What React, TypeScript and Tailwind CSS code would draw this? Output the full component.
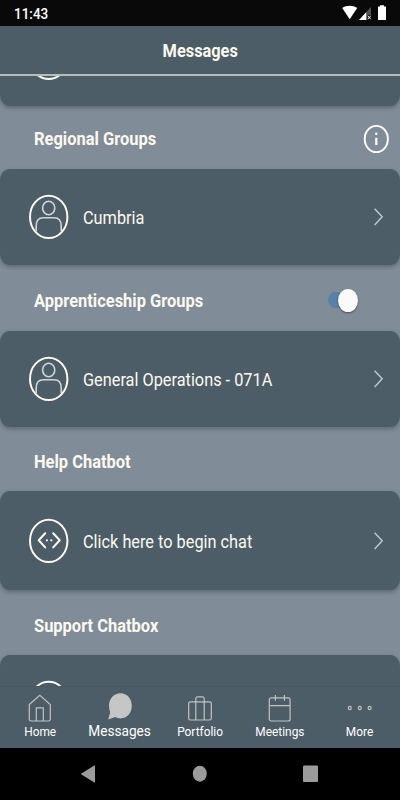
import React from 'react';
import clsx from 'clsx';

type AvatarKind = 'person' | 'bot';

function Avatar({ kind }: { kind: AvatarKind }) {
  return (
    <svg width="40" height="46" viewBox="0 0 40 46" fill="none" className="shrink-0">
      <ellipse cx="19.7" cy="22.9" rx="18.7" ry="21.2" stroke="#fcf9f0" strokeWidth="2" />
      {kind === 'person' ? (
        <g stroke="#ced4da" strokeWidth="1.6">
          <ellipse cx="19.7" cy="14" rx="6.1" ry="6.8" />
          <path d="M7.2 37V32C7.2 26.4 9.8 23.8 14.4 23.8H25C29.6 23.8 32.2 26.4 32.2 32V37" />
        </g>
      ) : (
        <g stroke="#fcf9f0" strokeWidth="2" strokeLinecap="round" strokeLinejoin="round">
          <path d="M16.2 15.2L9.7 22.3L16.2 29.4M24.2 15.2L30.7 22.3L24.2 29.4" />
          <path d="M17.9 22.3h.01M22.3 22.3h.01" strokeWidth="2.2" />
        </g>
      )}
    </svg>
  );
}

function Chevron() {
  return (
    <svg width="12" height="20" viewBox="0 0 12 20" fill="none" className="shrink-0">
      <path d="M1.6 1.7L9.2 9.8L1.6 17.9" stroke="#c3c8cf" strokeWidth="1.4" />
    </svg>
  );
}

function Card({ kind, label, className }: { kind: AvatarKind; label: string; className?: string }) {
  return (
    <div
      className={clsx(
        'flex shrink-0 items-center rounded-[10px/11px] bg-[#4d5d67] pl-[29px] pr-[15px] shadow-[0_2px_4px_rgba(40,50,60,0.4)]',
        className
      )}
    >
      <Avatar kind={kind} />
      <span className="ml-[14px] flex-1 origin-left scale-x-[0.858] whitespace-nowrap pt-[2px] text-[19px] leading-6 text-[#fcf9f0]">
        {label}
      </span>
      <Chevron />
    </div>
  );
}

function Heading({ title, className, children }: { title: string; className?: string; children?: React.ReactNode }) {
  return (
    <div className={clsx('flex shrink-0 items-center justify-between pl-[34px]', className)}>
      <h2 className="origin-left scale-x-[0.866] whitespace-nowrap text-[19px] font-bold leading-6 text-[#fcf9f0]">{title}</h2>
      {children}
    </div>
  );
}

function InfoIcon() {
  return (
    <svg width="26" height="30" viewBox="0 0 26 30" fill="none" className="mr-[11px]">
      <ellipse cx="13.3" cy="15" rx="11.6" ry="13.1" stroke="#fff" strokeWidth="1.9" />
      <path d="M13.3 13.8v7.2" stroke="#fff" strokeWidth="2.2" />
      <ellipse cx="13.3" cy="9.8" rx="1.2" ry="1.3" fill="#fff" />
    </svg>
  );
}

function Toggle() {
  return (
    <div className="mr-[42px] flex h-[16px] w-[30px] -translate-y-px items-center justify-end rounded-full bg-[#5781a8]">
      <div className="h-[23px] w-[20px] shrink-0 rounded-[50%] bg-[#fafafa] shadow-[0_1px_2px_rgba(0,0,0,0.45)]" />
    </div>
  );
}

const tabs = [
  {
    label: 'Home',
    icon: (
      <path d="M5.3 11.5L15.8 2.4L26.3 11.5V26A1.8 1.8 0 0 1 24.5 28H7.1A1.8 1.8 0 0 1 5.3 26ZM12.3 28V14.8H19.3V28" />
    ),
  },
  {
    label: 'Messages',
    active: true,
    icon: (
      <path
        d="M16.5 .2C23 .2 27.8 5.5 27.8 12.8C27.8 20 23 25.4 16.5 25.4C14.5 25.4 12.8 24.9 11.3 24L4.2 26.5L6.2 19.3C5.4 17.3 5 15.2 5 12.8C5 5.5 10 .2 16.5 .2Z"
        fill="#c5c6c6"
        stroke="none"
      />
    ),
  },
  {
    label: 'Portfolio',
    icon: (
      <>
        <rect x="4.7" y="8.8" width="22.6" height="18.2" rx="1.8" />
        <path d="M11.8 27V6A2 2 0 0 1 13.8 3.8H18.2A2 2 0 0 1 20.2 6V27" />
      </>
    ),
  },
  {
    label: 'Meetings',
    icon: (
      <>
        <rect x="5.3" y="4.8" width="20.8" height="23.2" rx="2" />
        <path d="M5.3 12.7H26.1M11.4 2V7.8M20.4 2V7.8" />
      </>
    ),
  },
  {
    label: 'More',
    icon: (
      <>
        <ellipse cx="5.8" cy="15" rx="1.5" ry="1.7" />
        <ellipse cx="15.8" cy="15" rx="1.5" ry="1.7" />
        <ellipse cx="25.6" cy="15" rx="1.5" ry="1.7" />
      </>
    ),
  },
];

export default function App() {
  return (
    <div className="flex h-[800px] w-[400px] flex-col overflow-hidden bg-[#808d98] font-['Roboto',sans-serif]">
      <div className="flex h-[26px] shrink-0 items-center justify-between bg-[#090909] pl-[14px] pr-[12px]">
        <span className="origin-left scale-x-[0.87] pt-[2px] text-[15.5px] font-medium leading-6 text-white">11:43</span>
        <svg width="48" height="18" viewBox="0 0 48 18">
          <path d="M2.2 4C6 1 13 1 17.2 4L9.7 15.2Z" fill="#fff" />
          <path d="M31 3V16H19Z" fill="#555" />
          <path d="M26.2 8.2V16H19Z" fill="#fff" />
          <path d="M27.3 11.3h4v5h-4z" fill="#090909" />
          <path d="M27.8 11.8L30.8 15.2M30.8 11.8L27.8 15.2" stroke="#fff" strokeWidth="1" />
          <path d="M40 1.3h4v1.2h2V16h-8V2.5h2z" fill="#fff" />
        </svg>
      </div>

      <header className="flex h-[50px] shrink-0 items-center justify-center border-b-2 border-[#b5bdb8] bg-[#4d5d67] pt-[2px]">
        <h1 className="scale-x-[0.87] text-[18.8px] font-bold leading-6 text-[#fcf9f0]">Messages</h1>
      </header>

      <main className="flex flex-1 flex-col justify-start overflow-hidden">
        <Card kind="person" label="" className="-mt-[67px] h-[97px]" />
        <Heading title="Regional Groups" className="h-[63px] pt-[3px]">
          <InfoIcon />
        </Heading>
        <Card kind="person" label="Cumbria" className="h-[96px]" />
        <Heading title="Apprenticeship Groups" className="h-[66px] pt-[6px]">
          <Toggle />
        </Heading>
        <Card kind="person" label="General Operations - 071A" className="h-[96px]" />
        <Heading title="Help Chatbot" className="h-[64px] pt-[5px]" />
        <Card kind="bot" label="Click here to begin chat" className="h-[99px]" />
        <Heading title="Support Chatbox" className="h-[65px] pt-[6px]" />
        <Card kind="bot" label="" className="h-[96px]" />
      </main>

      <nav className="grid h-[62px] shrink-0 grid-cols-5 border-t border-[#495963] bg-[#4d5d67]">
        {tabs.map((tab) => (
          <div key={tab.label} className="flex flex-col items-center pt-[6px]">
            <svg width="32" height="30" viewBox="0 0 32 30" fill="none" stroke="#bfc3c2" strokeWidth="1.2" className="shrink-0">
              {tab.icon}
            </svg>
            <span
              className={clsx(
                '-mt-px scale-x-[0.88] text-white',
                tab.active ? 'text-[15.5px] leading-[19px]' : 'text-[13.5px] leading-[18px]'
              )}
            >
              {tab.label}
            </span>
          </div>
        ))}
      </nav>

      <div className="flex h-[52px] shrink-0 items-center justify-center bg-black">
        <svg width="240" height="20" viewBox="0 0 240 20" fill="#9b9b9b">
          <path d="M14.3 1.5Q15 1 15 2V18Q15 19 14.3 18.5L1.4 10.6Q.6 10 1.4 9.4Z" />
          <ellipse cx="119.8" cy="9.7" rx="7" ry="8" />
          <rect x="223" y="1.5" width="15" height="16.5" rx="1" />
        </svg>
      </div>
    </div>
  );
}
